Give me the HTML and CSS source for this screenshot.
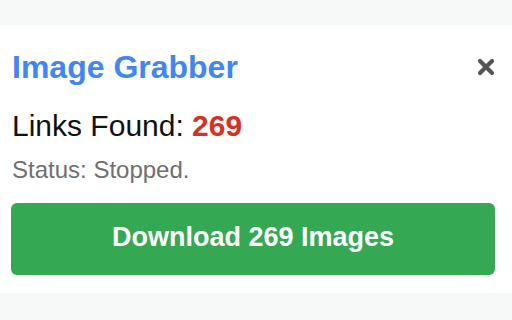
FILE: index.html
```html
<!DOCTYPE html>
<html lang="en">
<head>
  <meta charset="UTF-8" />
  <title>Image Grabber</title>
  <link rel="stylesheet" href="styles.css">
</head>
<body>
  <div class="popup">
    <div class="header">
      <h1 class="title">Image Grabber</h1>
      <button class="btn-close" title="Close">
        <svg width="18" height="18" viewBox="0 0 18 18">
          <path d="M3 3 L15 15 M15 3 L3 15" stroke="#555" stroke-width="4.2" stroke-linecap="round" fill="none"/>
        </svg>
      </button>
    </div>
    <p class="links">Links Found: <span class="count">269</span></p>
    <p class="status">Status: Stopped.</p>
    <button class="btn-download">Download 269 Images</button>
  </div>
</body>
</html>
```

FILE: styles.css
```css
* {
  margin: 0;
  padding: 0;
  box-sizing: border-box;
  font-family: 'Liberation Sans', Arial, sans-serif;
}

body {
  background: #f7f8f8;
  width: 512px;
  height: 320px;
  overflow: hidden;
}

/* Popup panel */
.popup {
  background: #fff;
  margin-top: 25px;
  padding: 24px 17px 18px 11px;
}

.header {
  display: flex;
  justify-content: space-between;
  align-items: center;
}

.title {
  font-size: 32px;
  line-height: 36px;
  font-weight: bold;
  color: #4285f4;
  padding-left: 1px;
}

.btn-close {
  background: none;
  border: none;
  width: 18px;
  height: 18px;
  display: flex;
  cursor: pointer;
}

.links {
  margin-top: 24px;
  font-size: 30px;
  line-height: 34px;
  color: #111;
  padding-left: 1px;
}

.count {
  color: #d93025;
  font-weight: bold;
}

.status {
  margin-top: 13px;
  font-size: 24px;
  line-height: 28px;
  color: #6f6f6f;
  padding-left: 1px;
}

/* Download button */
.btn-download {
  margin-top: 19px;
  width: 100%;
  height: 72px;
  background: #34a853;
  border: none;
  border-radius: 6px;
  color: #fff;
  font-size: 27px;
  font-weight: bold;
  padding-bottom: 3px;
  cursor: pointer;
}
```
